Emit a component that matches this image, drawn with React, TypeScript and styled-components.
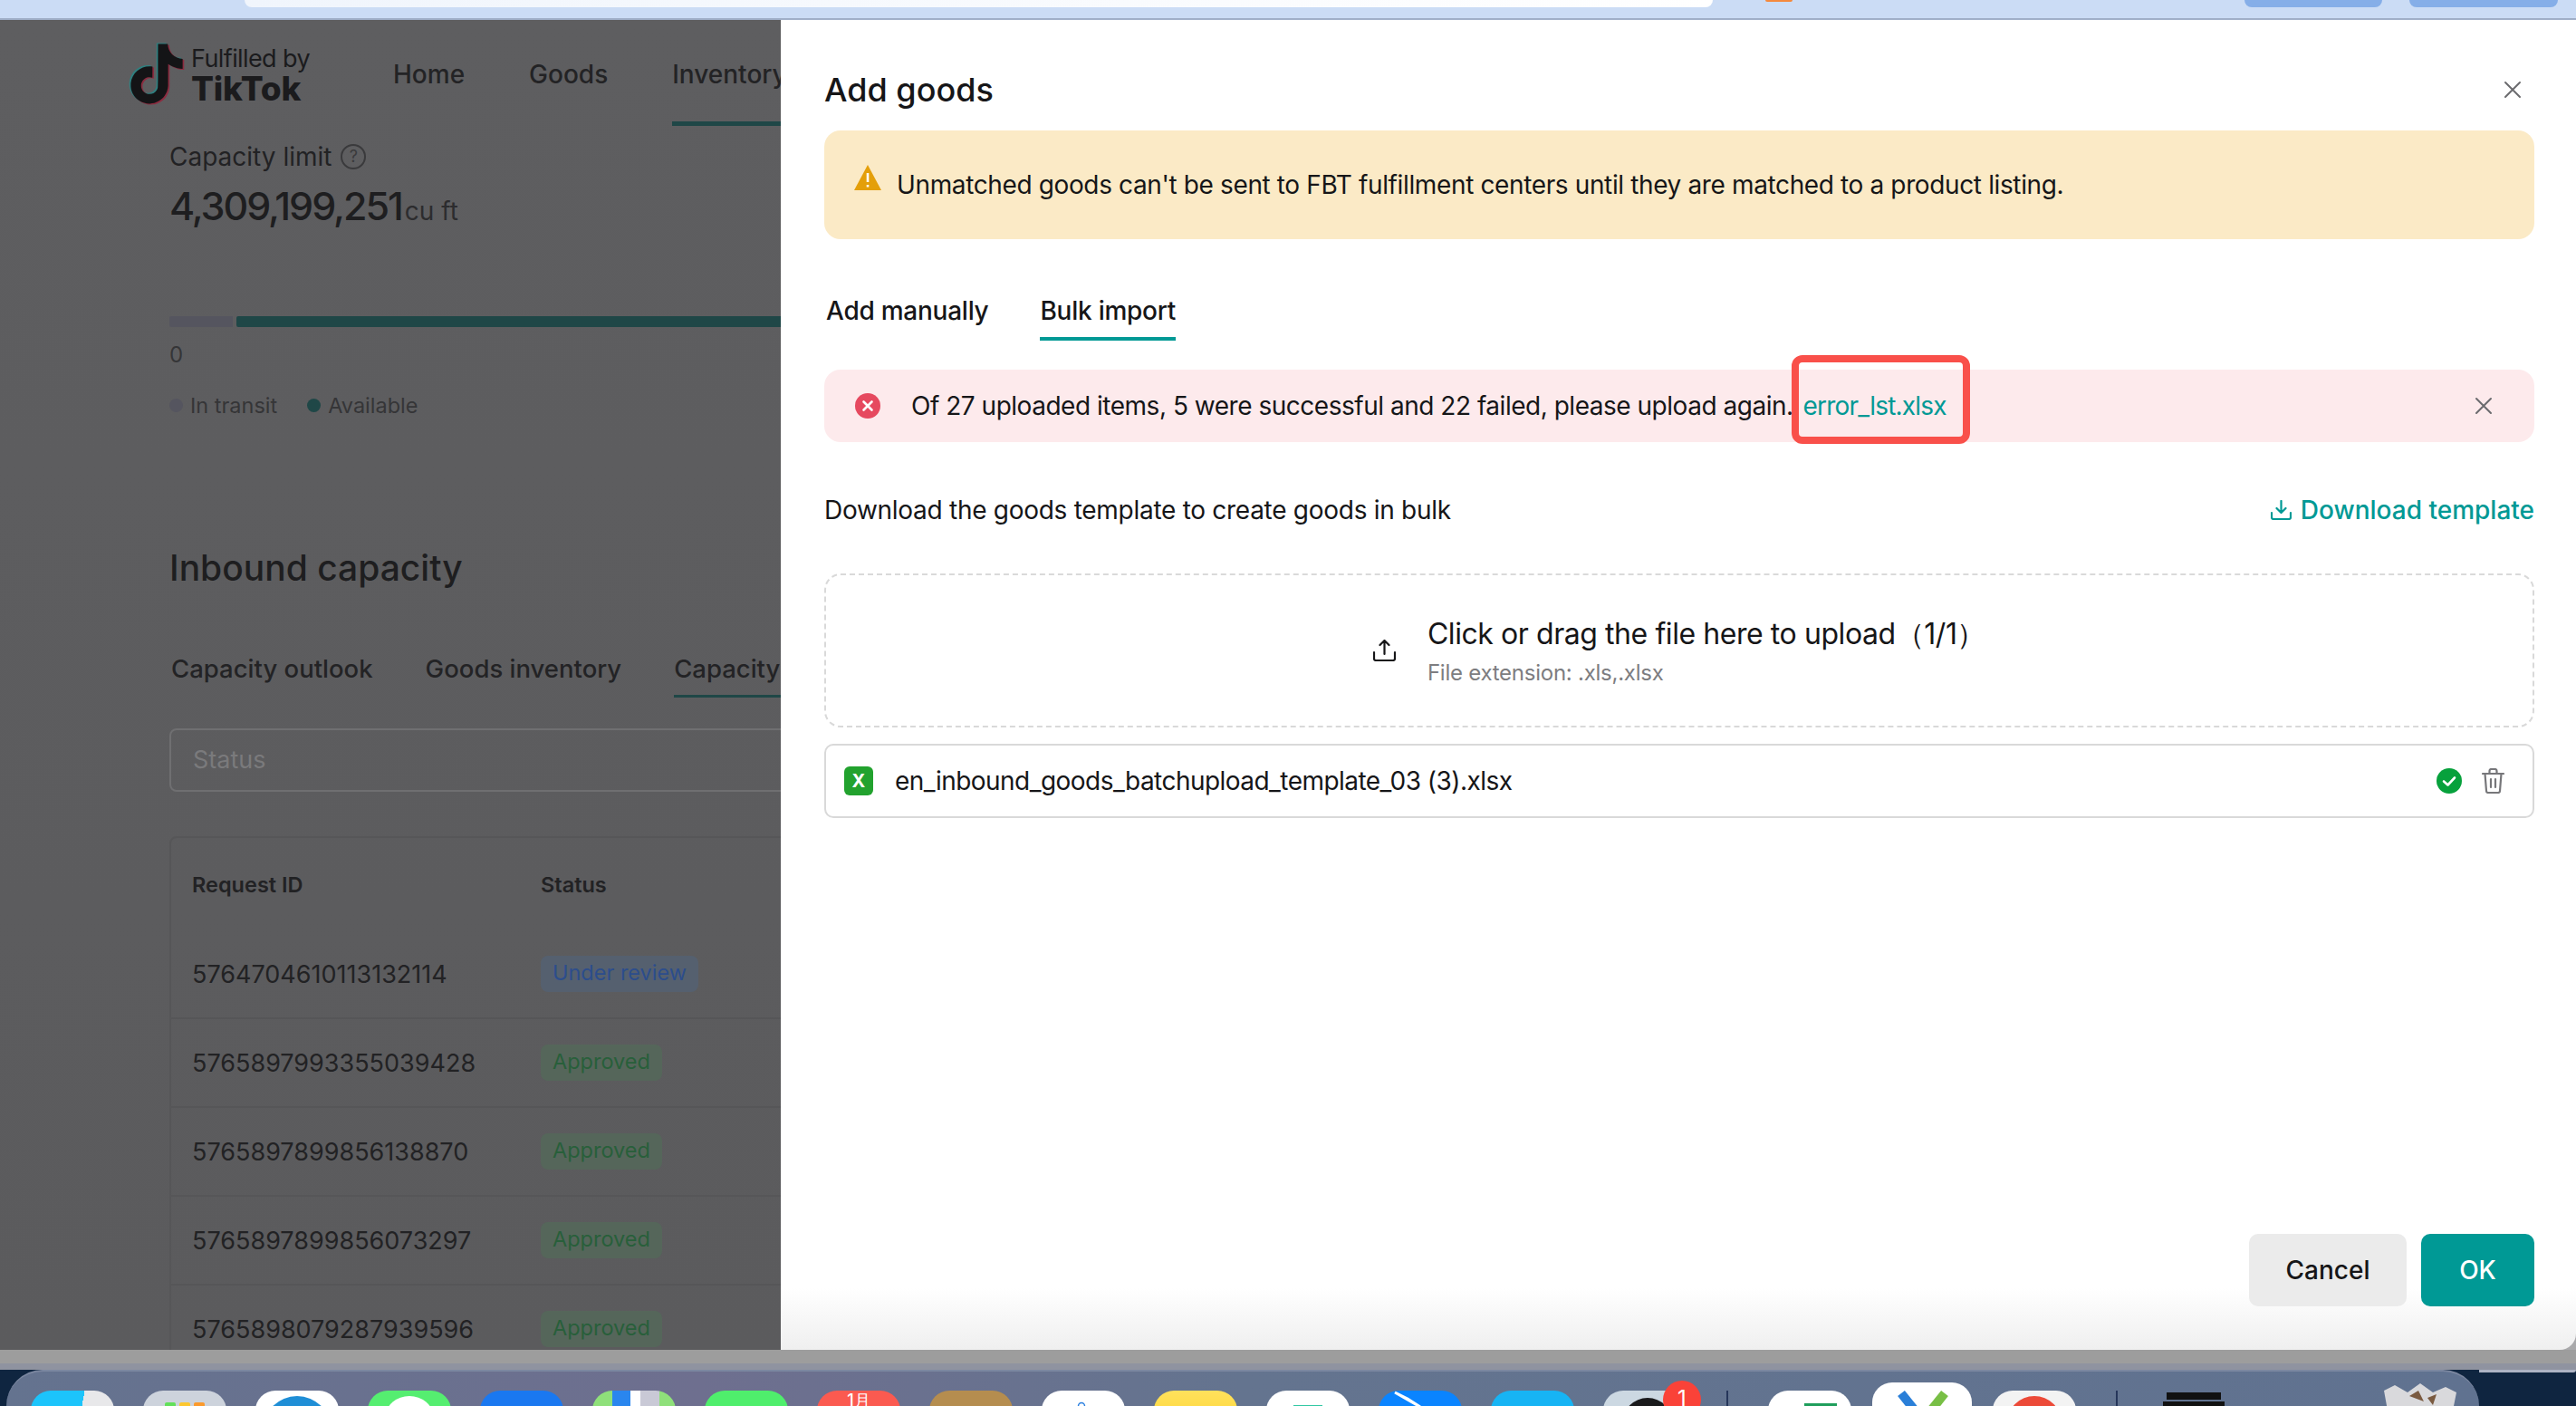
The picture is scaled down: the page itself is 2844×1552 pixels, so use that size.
import React from 'react';
import styled, { createGlobalStyle } from 'styled-components';

const GlobalStyle = createGlobalStyle`
  html, body {
    margin: 0;
    padding: 0;
    background: #0f2540;
    font-family: Inter, "Noto Sans", "Liberation Sans", sans-serif;
    overflow: hidden;
  }
  * { box-sizing: border-box; }
`;

const Screen = styled.div`
  width: 2844px;
  height: 1552px;
  overflow: hidden;
  display: flex;
  flex-direction: column;
`;

/* browser chrome sliver at the top */
const TopStrip = styled.div`
  height: 22px;
  flex: none;
  display: flex;
  align-items: flex-start;
  padding-left: 270px;
  background: #cbdcf5;
  border-bottom: 2px solid #a0afc8;
`;

const AddressBar = styled.div`
  width: 1621px;
  height: 8px;
  background: linear-gradient(90deg, #f0f5fc, #ffffff);
  border-radius: 0 0 16px 16px;
`;

const OrangeDot = styled.div`
  width: 30px;
  height: 2px;
  margin-left: 58px;
  background: #f5893d;
  border-radius: 0 0 3px 3px;
`;

const ChromeButton = styled.div<{ $width: number; $left: number }>`
  width: ${(p) => p.$width}px;
  height: 8px;
  margin-left: ${(p) => p.$left}px;
  background: #85aee8;
  border-radius: 0 0 16px 16px;
`;

const WindowFrame = styled.div`
  height: 1468px;
  flex: none;
  display: flex;
  background: #a9a9ab;
`;

/* dimmed page behind the drawer */
const Backdrop = styled.div`
  width: 862px;
  flex: none;
  overflow: hidden;
  background: linear-gradient(180deg, #5e5e60, #5b5b5d);
  color: #1b1b1d;
`;

const PageNav = styled.div`
  height: 117px;
  display: flex;
  padding-left: 143px;
  width: 1000px;
`;

const Logo = styled.div`
  width: 291px;
  flex: none;
  display: flex;
  align-items: flex-start;
  padding-top: 26px;
  gap: 8px;
`;

const LogoMark = styled.svg`
  overflow: visible;
  flex: none;
`;

const LogoText = styled.div`
  display: flex;
  flex-direction: column;
`;

const LogoTop = styled.span`
  font-size: 27px;
  line-height: 30px;
  font-weight: 400;
  letter-spacing: -0.6px;
  margin-top: 2px;
`;

const LogoBottom = styled.span`
  font-size: 37px;
  line-height: 36px;
  font-weight: 800;
  letter-spacing: -0.2px;
`;

const NavItem = styled.div<{ $active?: boolean }>`
  height: 117px;
  line-height: 120px;
  font-size: 28px;
  font-weight: 500;
  margin-right: 71px;
  color: #232325;
  border-bottom: 5px solid ${(p) => (p.$active ? '#1f4747' : 'transparent')};
`;

const PageBody = styled.div`
  padding-left: 187px;
  width: 1100px;
`;

const LimitLabel = styled.div`
  margin-top: 17px;
  height: 34px;
  line-height: 34px;
  font-size: 28px;
  display: flex;
  align-items: center;
  gap: 10px;
  color: #222224;
`;

const HelpMark = styled.span`
  width: 28px;
  height: 28px;
  border-radius: 50%;
  border: 2px solid #3a3a3c;
  color: #3a3a3c;
  font-size: 18px;
  line-height: 24px;
  text-align: center;
`;

const LimitValue = styled.div`
  margin-top: 10px;
  height: 54px;
  line-height: 54px;
  font-size: 43px;
  font-weight: 500;
  letter-spacing: -2.05px;
  color: #1e1e20;
`;

const LimitUnit = styled.span`
  font-size: 28px;
  font-weight: 400;
  letter-spacing: 0;
  color: #2c2c2e;
  margin-left: 3px;
`;

const CapacityBar = styled.div`
  margin-top: 95px;
  height: 12px;
  display: flex;
  gap: 4px;
`;

const BarPiece = styled.div<{ $width: number; $color: string }>`
  width: ${(p) => p.$width}px;
  background: ${(p) => p.$color};
  border-radius: 2px 0 0 2px;
`;

const ZeroTick = styled.div`
  margin-top: 16px;
  line-height: 30px;
  font-size: 24px;
  color: #353537;
`;

const Legend = styled.div`
  margin-top: 25px;
  height: 30px;
  display: flex;
  align-items: center;
  font-size: 23.5px;
  color: #353537;
`;

const LegendDot = styled.span<{ $color: string; $gap: number }>`
  width: 15px;
  height: 15px;
  border-radius: 50%;
  background: ${(p) => p.$color};
  margin: 0 8px 0 ${(p) => p.$gap}px;
`;

const SectionTitle = styled.div`
  margin-top: 140px;
  height: 50px;
  line-height: 50px;
  font-size: 39px;
  font-weight: 500;
  color: #1e1e20;
`;

const PageTabs = styled.div`
  margin-top: 69px;
  display: flex;
  gap: 58px;
  padding-left: 2px;
`;

const PageTab = styled.div<{ $active?: boolean }>`
  height: 49px;
  line-height: 34px;
  font-size: 27.5px;
  font-weight: 500;
  white-space: nowrap;
  color: #232325;
  border-bottom: 3px solid ${(p) => (p.$active ? '#1f4747' : 'transparent')};
`;

const StatusInput = styled.div`
  margin-top: 34px;
  height: 70px;
  line-height: 66px;
  padding-left: 24px;
  font-size: 27px;
  color: #7a7a7c;
  border: 2px solid #6f6f71;
  border-radius: 8px;
`;

const PageTable = styled.div`
  margin-top: 49px;
  border: 2px solid #565658;
  border-radius: 8px 0 0 0;
`;

const TableRow = styled.div<{ $head?: boolean }>`
  height: ${(p) => (p.$head ? '102px' : '98px')};
  display: grid;
  grid-template-columns: 385px 1fr;
  align-items: center;
  padding-left: 23px;
  font-size: ${(p) => (p.$head ? '23.5px' : '27px')};
  font-weight: ${(p) => (p.$head ? 600 : 400)};
  color: #222224;
  border-bottom: ${(p) => (p.$head ? 'none' : '2px solid #565658')};
`;

const Tag = styled.span<{ $tone: 'blue' | 'green' }>`
  justify-self: start;
  height: 40px;
  line-height: 38px;
  padding: 0 13px;
  border-radius: 8px;
  font-size: 23.5px;
  background: ${(p) => (p.$tone === 'blue' ? '#55606f' : '#55665a')};
  color: ${(p) => (p.$tone === 'blue' ? '#2c4d8c' : '#285f3a')};
`;

/* drawer */
const Drawer = styled.div`
  flex: 1;
  min-width: 0;
  display: flex;
  flex-direction: column;
  padding: 0 46px 48px 48px;
  background: linear-gradient(180deg, #ffffff 0, #ffffff 1400px, #efefef 100%);
  border-radius: 0 0 18px 0;
  color: #161618;
`;

const DrawerHead = styled.div`
  padding: 55px 14px 0 0;
  display: flex;
  justify-content: space-between;
  align-items: center;
`;

const DrawerTitle = styled.div`
  height: 44px;
  line-height: 44px;
  font-size: 36px;
  font-weight: 500;
`;

const WarnBanner = styled.div`
  margin-top: 23px;
  height: 120px;
  display: flex;
  align-items: center;
  gap: 17px;
  padding-left: 33px;
  background: #fbeac6;
  border-radius: 18px;
  font-size: 28px;
  letter-spacing: -0.37px;
`;

const WarnIcon = styled.svg`
  width: 30px;
  height: 28px;
  margin-top: -16px;
  flex: none;
`;

const DrawerTabs = styled.div`
  margin-top: 62px;
  padding-left: 2px;
  display: flex;
  gap: 57px;
`;

const DrawerTab = styled.div<{ $active?: boolean }>`
  height: 50px;
  line-height: 34px;
  font-size: 28px;
  font-weight: 500;
  letter-spacing: -0.25px;
  border-bottom: 4px solid ${(p) => (p.$active ? '#009995' : 'transparent')};
`;

const ErrorBar = styled.div`
  margin-top: 32px;
  height: 80px;
  display: flex;
  align-items: center;
  padding: 0 46px 0 34px;
  background: #fdeaec;
  border-radius: 18px;
  font-size: 28px;
`;

const ErrorText = styled.span`
  margin-left: 34px;
  flex: 1;
  white-space: nowrap;
  letter-spacing: -0.48px;
`;

const FileLink = styled.span`
  position: relative;
  margin-left: 11px;
  letter-spacing: -0.8px;
  color: #009995;
`;

/* red box someone drew over the screenshot */
const Annotation = styled.span`
  position: absolute;
  top: -39px;
  bottom: -25px;
  left: -13px;
  right: -26px;
  border: 8px solid #f9504a;
  border-radius: 12px;
`;

const TemplateRow = styled.div`
  margin-top: 58px;
  height: 34px;
  line-height: 34px;
  display: flex;
  justify-content: space-between;
  font-size: 28px;
`;

const TemplateHint = styled.span`
  letter-spacing: -0.28px;
`;

const TemplateLink = styled.span`
  display: flex;
  align-items: center;
  gap: 10px;
  color: #009995;
  font-weight: 500;
`;

const DropZone = styled.div`
  margin-top: 53px;
  height: 170px;
  display: flex;
  align-items: center;
  justify-content: center;
  gap: 35px;
  border: 2px dashed #d9d9d9;
  border-radius: 18px;
`;

const DropText = styled.div`
  display: flex;
  flex-direction: column;
  gap: 8px;
  margin-top: 2px;
`;

const DropTitle = styled.div`
  font-size: 32px;
  line-height: 40px;
  letter-spacing: -0.43px;
`;

const DropHint = styled.div`
  font-size: 24px;
  line-height: 30px;
  letter-spacing: -0.25px;
  color: #7d7d80;
`;

const FileRow = styled.div`
  margin-top: 18px;
  height: 82px;
  display: flex;
  align-items: center;
  padding: 0 31px 0 20px;
  border: 2px solid #d9d9d9;
  border-radius: 10px;
  font-size: 28px;
`;

const ExcelBadge = styled.span`
  width: 32px;
  height: 32px;
  flex: none;
  display: flex;
  align-items: center;
  justify-content: center;
  border-radius: 6px;
  background: #22a22e;
  color: #ffffff;
  font-size: 20px;
  font-weight: 700;
`;

const FileName = styled.span`
  margin-left: 24px;
  flex: 1;
  letter-spacing: -0.54px;
`;

const RowIcons = styled.div`
  display: flex;
  align-items: center;
  gap: 22px;
`;

const DrawerFoot = styled.div`
  margin-top: auto;
  display: flex;
  justify-content: flex-end;
  gap: 16px;
`;

const FootButton = styled.div<{ $primary?: boolean }>`
  width: ${(p) => (p.$primary ? '125px' : '174px')};
  height: 80px;
  line-height: 80px;
  text-align: center;
  font-size: 28px;
  font-weight: 500;
  border-radius: 10px;
  background: ${(p) => (p.$primary ? '#009995' : '#ebebeb')};
  color: ${(p) => (p.$primary ? '#ffffff' : '#161618')};
`;

/* desktop + dock under the window */
const Desk = styled.div`
  flex: 1;
  display: flex;
  flex-direction: column;
  position: relative;
  background: #0f2540;
`;

const Shelf = styled.div`
  height: 22px;
  flex: none;
  background: linear-gradient(180deg, #9d9d9d 0, #9d9d9d 15px, #8f93a0 15px);
`;

const ShelfCorner = styled.div`
  position: absolute;
  top: 22px;
  right: 0;
  width: 107px;
  height: 3px;
  background: #aeb4c4;
  border-radius: 0 0 10px 0;
`;

const Dock = styled.div`
  flex: 1;
  margin: 0 107px 0 7px;
  padding: 21px 0 0 27px;
  display: flex;
  gap: 32px;
  background: linear-gradient(90deg, #64738f, #6e6f8f 28%, #64748f 50%, #607290 100%);
  border-radius: 40px 40px 0 0;
  border-top: 2px solid #7b87a0;
`;

const DockSlot = styled.div<{ $grow?: number }>`
  position: relative;
  width: ${(p) => 92 + (p.$grow ?? 0) * 2}px;
  height: 92px;
  margin: 0 ${(p) => -(p.$grow ?? 0)}px;
  flex: none;
`;

const DockIcon = styled.div<{ $bg: string; $raise?: number }>`
  width: 100%;
  height: 100%;
  margin-top: ${(p) => -(p.$raise ?? 0)}px;
  overflow: hidden;
  border-radius: 22px;
  background: ${(p) => p.$bg};
  display: flex;
  justify-content: center;
`;

const CalendarText = styled.span`
  color: #ffffff;
  font-size: 18px;
  font-weight: 500;
  line-height: 22px;
`;

const DockBadge = styled.span`
  position: absolute;
  top: -11px;
  right: -16px;
  width: 42px;
  height: 42px;
  border-radius: 50%;
  background: #fa4238;
  color: #ffffff;
  font-size: 24px;
  line-height: 40px;
  text-align: center;
`;

const DockDivider = styled.div`
  width: 2px;
  height: 30px;
  flex: none;
  background: #26365a;
  margin: 0 12px;
`;

const TrashCan = styled.svg`
  margin-top: -8px;
`;

const CloseIcon = ({ size, color = '#6b6b6e' }: { size: number; color?: string }) => (
  <svg width={size} height={size} viewBox="0 0 20 20" fill="none" stroke={color} strokeWidth="2" strokeLinecap="round">
    <path d="M2 2 18 18M18 2 2 18" />
  </svg>
);

const TikTokPath =
  'M12.525.02c1.31-.02 2.61-.01 3.91-.02.08 1.53.63 3.09 1.75 4.17 1.12 1.11 2.7 1.62 4.24 1.79v4.03c-1.44-.05-2.89-.35-4.2-.97-.57-.26-1.1-.59-1.62-.93-.01 2.92.01 5.84-.02 8.75-.08 1.4-.54 2.79-1.35 3.94-1.31 1.92-3.58 3.17-5.91 3.21-1.43.08-2.86-.31-4.08-1.03-2.02-1.19-3.44-3.37-3.65-5.71-.02-.5-.03-1-.01-1.49.18-1.9 1.12-3.72 2.58-4.96 1.66-1.44 3.98-2.13 6.15-1.72.02 1.48-.04 2.96-.04 4.44-.99-.32-2.15-.23-3.02.37-.63.41-1.11 1.04-1.36 1.75-.21.51-.15 1.07-.14 1.61.24 1.64 1.82 3.02 3.5 2.87 1.12-.01 2.19-.66 2.77-1.61.19-.33.4-.67.41-1.06.1-1.79.06-3.57.07-5.36.01-4.03-.01-8.05.02-12.07z';

const rows = [
  { id: '5764704610113132114', status: 'Under review', tone: 'blue' as const },
  { id: '5765897993355039428', status: 'Approved', tone: 'green' as const },
  { id: '5765897899856138870', status: 'Approved', tone: 'green' as const },
  { id: '5765897899856073297', status: 'Approved', tone: 'green' as const },
  { id: '5765898079287939596', status: 'Approved', tone: 'green' as const },
];

const App: React.FC = () => (
  <Screen>
    <GlobalStyle />
    <TopStrip>
      <AddressBar />
      <OrangeDot />
      <ChromeButton $width={152} $left={499} />
      <ChromeButton $width={164} $left={30} />
    </TopStrip>

    <WindowFrame>
      <Backdrop>
        <PageNav>
          <Logo>
            <LogoMark width="60" height="67" viewBox="1.2 -0.2 21.6 24.4">
              <path d={TikTokPath} fill="#2f7f7f" transform="translate(-0.6 -0.4)" />
              <path d={TikTokPath} fill="#8c2c40" transform="translate(0.6 0.4)" />
              <path d={TikTokPath} fill="#141416" />
            </LogoMark>
            <LogoText>
              <LogoTop>Fulfilled by</LogoTop>
              <LogoBottom>TikTok</LogoBottom>
            </LogoText>
          </Logo>
          <NavItem>Home</NavItem>
          <NavItem>Goods</NavItem>
          <NavItem $active>Inventory</NavItem>
        </PageNav>
        <PageBody>
          <LimitLabel>
            Capacity limit <HelpMark>?</HelpMark>
          </LimitLabel>
          <LimitValue>
            4,309,199,251<LimitUnit>cu ft</LimitUnit>
          </LimitValue>
          <CapacityBar>
            <BarPiece $width={70} $color="#55555f" />
            <BarPiece $width={840} $color="#1f4747" />
          </CapacityBar>
          <ZeroTick>0</ZeroTick>
          <Legend>
            <LegendDot $color="#55555f" $gap={0} />
            In transit
            <LegendDot $color="#1f4747" $gap={33} />
            Available
          </Legend>
          <SectionTitle>Inbound capacity</SectionTitle>
          <PageTabs>
            <PageTab>Capacity outlook</PageTab>
            <PageTab>Goods inventory</PageTab>
            <PageTab $active>Capacity requests</PageTab>
          </PageTabs>
          <StatusInput>Status</StatusInput>
          <PageTable>
            <TableRow $head>
              <span>Request ID</span>
              <span>Status</span>
            </TableRow>
            {rows.map((row) => (
              <TableRow key={row.id}>
                <span>{row.id}</span>
                <Tag $tone={row.tone}>{row.status}</Tag>
              </TableRow>
            ))}
          </PageTable>
        </PageBody>
      </Backdrop>

      <Drawer>
        <DrawerHead>
          <DrawerTitle>Add goods</DrawerTitle>
          <CloseIcon size={20} />
        </DrawerHead>
        <WarnBanner>
          <WarnIcon viewBox="0 0 30 28">
            <path d="M15 0 30 28H0z" fill="#e49f0a" />
            <path d="M15 9v10M15 22v2.5" stroke="#ffffff" strokeWidth="2.6" />
          </WarnIcon>
          Unmatched goods can't be sent to FBT fulfillment centers until they are matched to a product listing.
        </WarnBanner>
        <DrawerTabs>
          <DrawerTab>Add manually</DrawerTab>
          <DrawerTab $active>Bulk import</DrawerTab>
        </DrawerTabs>
        <ErrorBar>
          <svg width="28" height="28" viewBox="0 0 28 28">
            <circle cx="14" cy="14" r="14" fill="#e6495f" />
            <path d="M9.5 9.5 18.500 18.500M18.500 9.500 9.500 18.500" stroke="#ffffff" strokeWidth="2.6" strokeLinecap="round" />
          </svg>
          <ErrorText>
            Of 27 uploaded items, 5 were successful and 22 failed, please upload again.
            <FileLink>
              error_lst.xlsx
              <Annotation />
            </FileLink>
          </ErrorText>
          <CloseIcon size={20} />
        </ErrorBar>
        <TemplateRow>
          <TemplateHint>Download the goods template to create goods in bulk</TemplateHint>
          <TemplateLink>
            <svg width="23" height="22" viewBox="0 0 23 22" fill="none" stroke="#009995" strokeWidth="2.2" strokeLinecap="round" strokeLinejoin="round">
              <path d="M11.500 1v12M6.500 9l5 5 5-5M1 14v5a2 2 0 0 0 2 2h17a2 2 0 0 0 2-2v-5" />
            </svg>
            Download template
          </TemplateLink>
        </TemplateRow>
        <DropZone>
          <svg width="25" height="24" viewBox="0 0 25 24" fill="none" stroke="#161618" strokeWidth="2.2" strokeLinecap="round" strokeLinejoin="round">
            <path d="M12.500 16V1.500M7.500 6l5-5 5 5M1 14v7a2 2 0 0 0 2 2h19a2 2 0 0 0 2-2v-7" />
          </svg>
          <DropText>
            <DropTitle>Click or drag the file here to upload（1/1）</DropTitle>
            <DropHint>File extension: .xls,.xlsx</DropHint>
          </DropText>
        </DropZone>
        <FileRow>
          <ExcelBadge>X</ExcelBadge>
          <FileName>en_inbound_goods_batchupload_template_03 (3).xlsx</FileName>
          <RowIcons>
            <svg width="28" height="28" viewBox="0 0 28 28" fill="none">
              <circle cx="14" cy="14" r="14" fill="#07a13c" />
              <path d="M8 14.500 12.500 18.500 20 10.500" stroke="#ffffff" strokeWidth="2.6" strokeLinecap="round" strokeLinejoin="round" />
            </svg>
            <svg width="25" height="28" viewBox="0 0 25 28" fill="none" stroke="#77777a" strokeWidth="2.2" strokeLinecap="round" strokeLinejoin="round">
              <path d="M1 6h23M8.500 6V3a2 2 0 0 1 2-2h4a2 2 0 0 1 2 2v3M3.500 6l1.500 19a2 2 0 0 0 2 2h11a2 2 0 0 0 2-2l1.500-19M10 12v9M15 12v9" />
            </svg>
          </RowIcons>
        </FileRow>
        <DrawerFoot>
          <FootButton>Cancel</FootButton>
          <FootButton $primary>OK</FootButton>
        </DrawerFoot>
      </Drawer>
    </WindowFrame>

    <Desk>
      <Shelf />
      <ShelfCorner />
      <Dock>
        <DockSlot><DockIcon $bg="linear-gradient(100deg, #1cc4fb 55%, #e8e8ea 55%)" /></DockSlot>
        <DockSlot>
          <DockIcon $bg="#cdd3dc">
            <svg width="60" height="20" viewBox="0 0 60 20">
              <rect x="8" y="13" width="12" height="12" rx="2" fill="#62e05a" />
              <rect x="24" y="13" width="12" height="12" rx="2" fill="#fdc72f" />
              <rect x="40" y="13" width="12" height="12" rx="2" fill="#fb9a2c" />
            </svg>
          </DockIcon>
        </DockSlot>
        <DockSlot>
          <DockIcon $bg="#ffffff">
            <svg width="80" height="24" viewBox="0 0 80 24"><circle cx="40" cy="44" r="38" fill="#1f8ed6" /></svg>
          </DockIcon>
        </DockSlot>
        <DockSlot>
          <DockIcon $bg="#55ee70">
            <svg width="60" height="24" viewBox="0 0 60 24"><ellipse cx="30" cy="28" rx="26" ry="22" fill="#ffffff" /></svg>
          </DockIcon>
        </DockSlot>
        <DockSlot><DockIcon $bg="#1a78f0" /></DockSlot>
        <DockSlot>
          <DockIcon $bg="linear-gradient(90deg, #8fe07a 24%, #2a86ee 24%, #2a86ee 46%, #ffffff 46%, #ffffff 58%, #c9c9d6 58%, #c9c9d6 80%, #8fe07a 80%)" />
        </DockSlot>
        <DockSlot><DockIcon $bg="#4fee6c" /></DockSlot>
        <DockSlot><DockIcon $bg="#fb5a50"><CalendarText>1月</CalendarText></DockIcon></DockSlot>
        <DockSlot><DockIcon $bg="#b58d4f" /></DockSlot>
        <DockSlot>
          <DockIcon $bg="#ffffff">
            <svg width="40" height="20" viewBox="0 0 40 20"><circle cx="18" cy="17" r="3.500" fill="none" stroke="#2a7fe0" strokeWidth="1.500" /></svg>
          </DockIcon>
        </DockSlot>
        <DockSlot><DockIcon $bg="linear-gradient(180deg, #ffe15c, #ffc800)" /></DockSlot>
        <DockSlot>
          <DockIcon $bg="#ffffff">
            <svg width="40" height="20" viewBox="0 0 40 20"><rect x="4" y="16" width="32" height="6" fill="#2fc7a2" /></svg>
          </DockIcon>
        </DockSlot>
        <DockSlot>
          <DockIcon $bg="#0a84ff">
            <svg width="60" height="20" viewBox="0 0 60 20"><path d="M2 2 30 18 16 9z" fill="#ffffff" stroke="#ffffff" strokeWidth="3" /></svg>
          </DockIcon>
        </DockSlot>
        <DockSlot><DockIcon $bg="#17b4f4" /></DockSlot>
        <DockSlot>
          <DockIcon $bg="#ccd8e2">
            <svg width="70" height="20" viewBox="0 0 70 20"><circle cx="38" cy="36" r="28" fill="#1a1a1c" /></svg>
          </DockIcon>
          <DockBadge>1</DockBadge>
        </DockSlot>
        <DockDivider />
        <DockSlot>
          <DockIcon $bg="#ffffff">
            <svg width="60" height="20" viewBox="0 0 60 20"><rect x="24" y="14" width="36" height="10" fill="#1f9e5c" /></svg>
          </DockIcon>
        </DockSlot>
        <DockSlot $grow={9}>
          <DockIcon $bg="#ffffff" $raise={9}>
            <svg width="90" height="32" viewBox="0 0 90 32">
              <path d="M22 12 38 32" stroke="#2a7fd8" strokeWidth="10" />
              <path d="M70 12 54 32" stroke="#78bf45" strokeWidth="10" />
            </svg>
          </DockIcon>
        </DockSlot>
        <DockSlot>
          <DockIcon $bg="#f3f3f3">
            <svg width="70" height="20" viewBox="0 0 70 20"><circle cx="35" cy="36" r="30" fill="#ec4a38" /></svg>
          </DockIcon>
        </DockSlot>
        <DockDivider />
        <DockSlot>
          <svg width="86" height="24" viewBox="0 0 86 24">
            <rect x="10" y="2" width="60" height="8" fill="#111" />
            <rect x="6" y="12" width="68" height="8" fill="#111" />
            <path d="M2 22h76l8 2H2z" fill="#eee" />
          </svg>
        </DockSlot>
        <DockSlot />
        <DockSlot>
          <TrashCan width="84" height="30" viewBox="0 0 84 30">
            <path d="M2 8 14 2 28 10 42 0 56 10 70 4 82 10 78 30H6z" fill="#d9d9dc" />
            <path d="M30 14 40 8 46 20zM50 16 60 12 56 24z" fill="#7a5a40" />
          </TrashCan>
        </DockSlot>
      </Dock>
    </Desk>
  </Screen>
);

export default App;
